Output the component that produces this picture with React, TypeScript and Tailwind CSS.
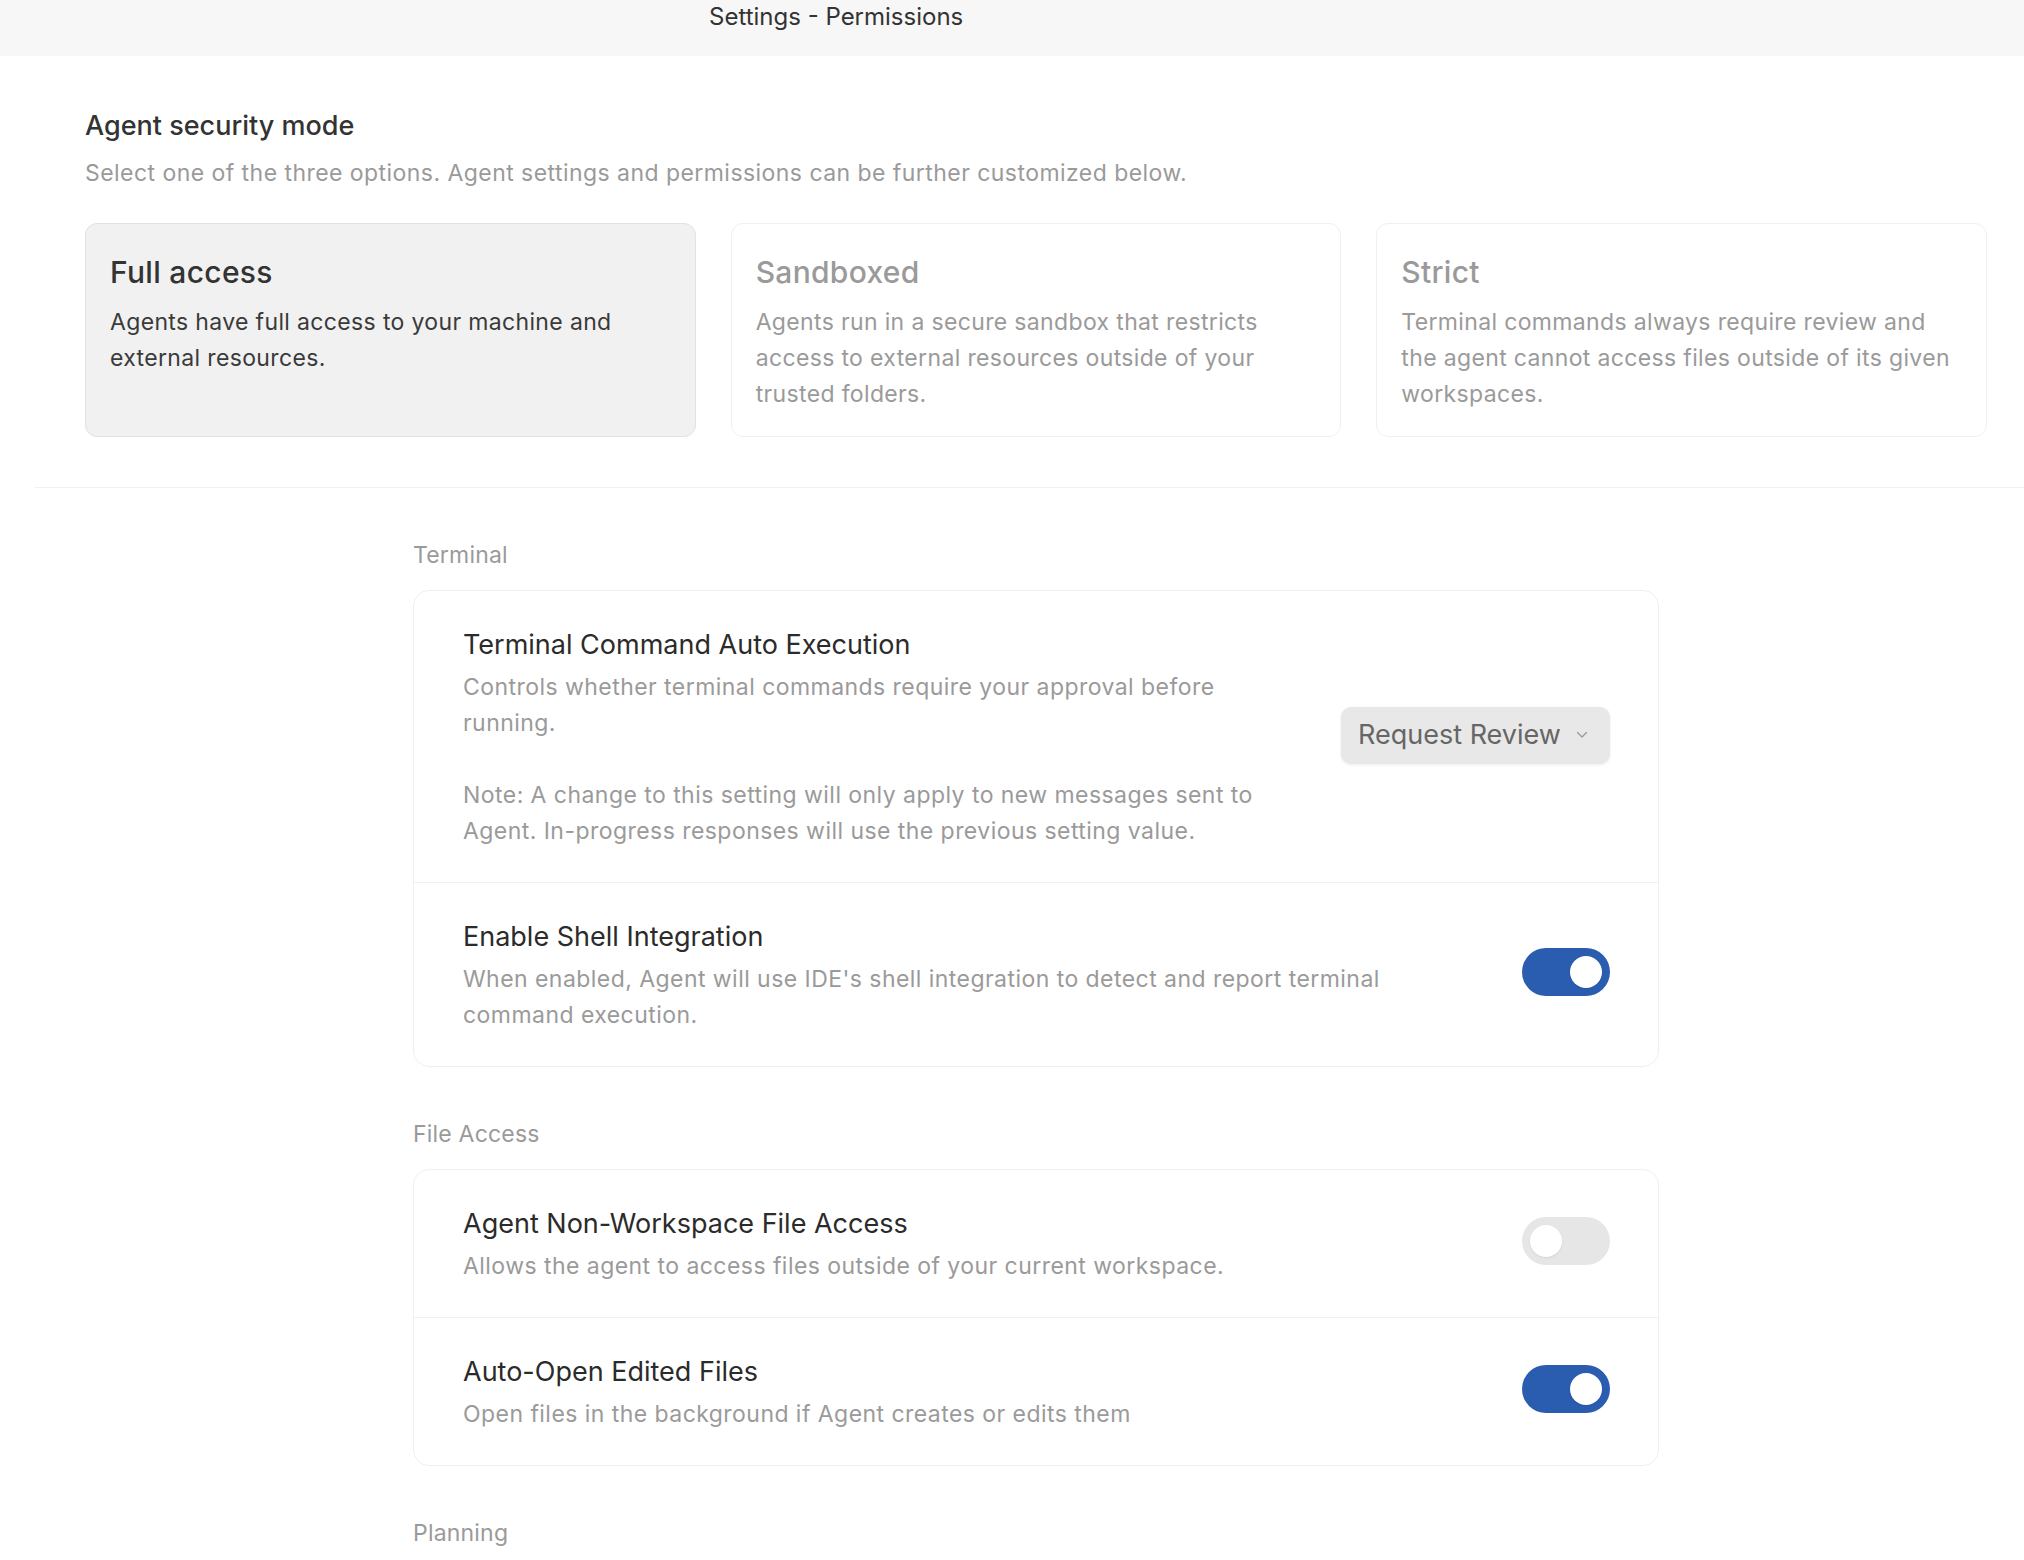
import React from "react";

function Toggle({ on }: { on: boolean }) {
  return (
    <div
      className={
        on
          ? "mb-[6px] flex h-[48px] w-[88px] shrink-0 items-center justify-end rounded-full bg-[#2a5caf] p-[8px]"
          : "mb-[6px] flex h-[48px] w-[88px] shrink-0 items-center justify-start rounded-full bg-[#e6e6e6] p-[8px]"
      }
    >
      <div className="h-[32px] w-[32px] rounded-full bg-white shadow-[0_1px_2px_rgba(0,0,0,0.08)]" />
    </div>
  );
}

function Row({
  title,
  children,
  control,
  divider,
}: {
  title: string;
  children: React.ReactNode;
  control: React.ReactNode;
  divider?: boolean;
}) {
  return (
    <div
      className={
        divider
          ? "flex items-center gap-[64px] border-t border-[#f0f0f0] pb-[33px] pl-[49px] pr-[48px] pt-[34px]"
          : "flex items-center gap-[64px] pb-[33px] pl-[49px] pr-[48px] pt-[34px]"
      }
    >
      <div className="min-w-0 flex-1">
        <div className="text-[27px] leading-[40px] text-[#2b2b2b]">{title}</div>
        <div className="mt-[4px] whitespace-nowrap text-[23px] leading-[36px] tracking-[0.45px] text-[#9a9a9a]">
          {children}
        </div>
      </div>
      {control}
    </div>
  );
}

function Section({ label, children }: { label: string; children?: React.ReactNode }) {
  return (
    <div className="pt-[51px]">
      <div className="text-[23px] leading-[32px] tracking-[0.2px] text-[#9a9a9a]">{label}</div>
      {children ? (
        <div className="mt-[19px] overflow-hidden rounded-[16px] border border-[#efefef] bg-white">{children}</div>
      ) : null}
    </div>
  );
}

function ModeCard({
  title,
  desc,
  active,
}: {
  title: string;
  desc: React.ReactNode;
  active?: boolean;
}) {
  return (
    <div
      className={
        active
          ? "h-[214px] rounded-[12px] border border-[#e2e2e2] bg-[#f1f1f1] px-[24px] pt-[30px]"
          : "h-[214px] rounded-[12px] border border-[#f0f0f0] bg-white px-[24px] pt-[30px]"
      }
    >
      <div
        className={
          active
            ? "text-[30px] font-medium leading-[36px] tracking-[0.3px] text-[#333]"
            : "text-[30px] font-medium leading-[36px] tracking-[0.3px] text-[#9a9a9a]"
        }
      >
        {title}
      </div>
      <div
        className={
          active
            ? "mt-[14px] whitespace-nowrap text-[23px] leading-[36px] tracking-[0.35px] text-[#3a3a3a]"
            : "mt-[14px] whitespace-nowrap text-[23px] leading-[36px] tracking-[0.35px] text-[#9a9a9a]"
        }
      >
        {desc}
      </div>
    </div>
  );
}

export default function App() {
  return (
    <div className="min-h-[1560px] w-[2024px] overflow-hidden bg-white font-['Inter','Noto_Sans',sans-serif] antialiased">
      <div className="h-[56px] bg-[#f7f7f7] pl-[709px] pt-[2px]">
        <span className="text-[24px] leading-[30px] text-[#333]">Settings - Permissions</span>
      </div>

      <div className="pl-[85px] pr-[37px] pt-[54px]">
        <h1 className="text-[27px] font-medium leading-[32px] text-[#333]">Agent security mode</h1>
        <p className="mt-[16px] text-[23px] leading-[30px] tracking-[0.45px] text-[#9a9a9a]">
          Select one of the three options. Agent settings and permissions can be further customized below.
        </p>
        <div className="mt-[35px] grid grid-cols-3 gap-[35px]">
          <ModeCard
            active
            title="Full access"
            desc={
              <>
                Agents have full access to your machine and
                <br />
                external resources.
              </>
            }
          />
          <ModeCard
            title="Sandboxed"
            desc={
              <>
                Agents run in a secure sandbox that restricts
                <br />
                access to external resources outside of your
                <br />
                trusted folders.
              </>
            }
          />
          <ModeCard
            title="Strict"
            desc={
              <>
                Terminal commands always require review and
                <br />
                the agent cannot access files outside of its given
                <br />
                workspaces.
              </>
            }
          />
        </div>
      </div>

      <div className="ml-[35px] mt-[50px] h-px bg-[#f0f0f0]" />

      <div className="ml-[413px] w-[1246px]">
        <Section label="Terminal">
          <Row
            title="Terminal Command Auto Execution"
            control={
              <button className="mb-[4px] flex h-[57px] w-[269px] shrink-0 items-center justify-between rounded-[10px] bg-[#e8e8e8] pl-[17px] pr-[22px] shadow-[0_1px_3px_rgba(0,0,0,0.08)]">
                <span className="text-[27px] leading-[32px] text-[#666]">Request Review</span>
                <svg width="12" height="8" viewBox="0 0 12 8" fill="none">
                  <path d="M1.5 1.5 L6 6 L10.5 1.5" stroke="#9a9a9a" strokeWidth="1.4" strokeLinecap="round" strokeLinejoin="round" />
                </svg>
              </button>
            }
          >
            Controls whether terminal commands require your approval before
            <br />
            running.
            <br />
            <br />
            Note: A change to this setting will only apply to new messages sent to
            <br />
            Agent. In-progress responses will use the previous setting value.
          </Row>
          <Row divider title="Enable Shell Integration" control={<Toggle on />}>
            When enabled, Agent will use IDE&apos;s shell integration to detect and report terminal
            <br />
            command execution.
          </Row>
        </Section>

        <Section label="File Access">
          <Row title="Agent Non-Workspace File Access" control={<Toggle on={false} />}>
            Allows the agent to access files outside of your current workspace.
          </Row>
          <Row divider title="Auto-Open Edited Files" control={<Toggle on />}>
            Open files in the background if Agent creates or edits them
          </Row>
        </Section>

        <Section label="Planning" />
      </div>
    </div>
  );
}
